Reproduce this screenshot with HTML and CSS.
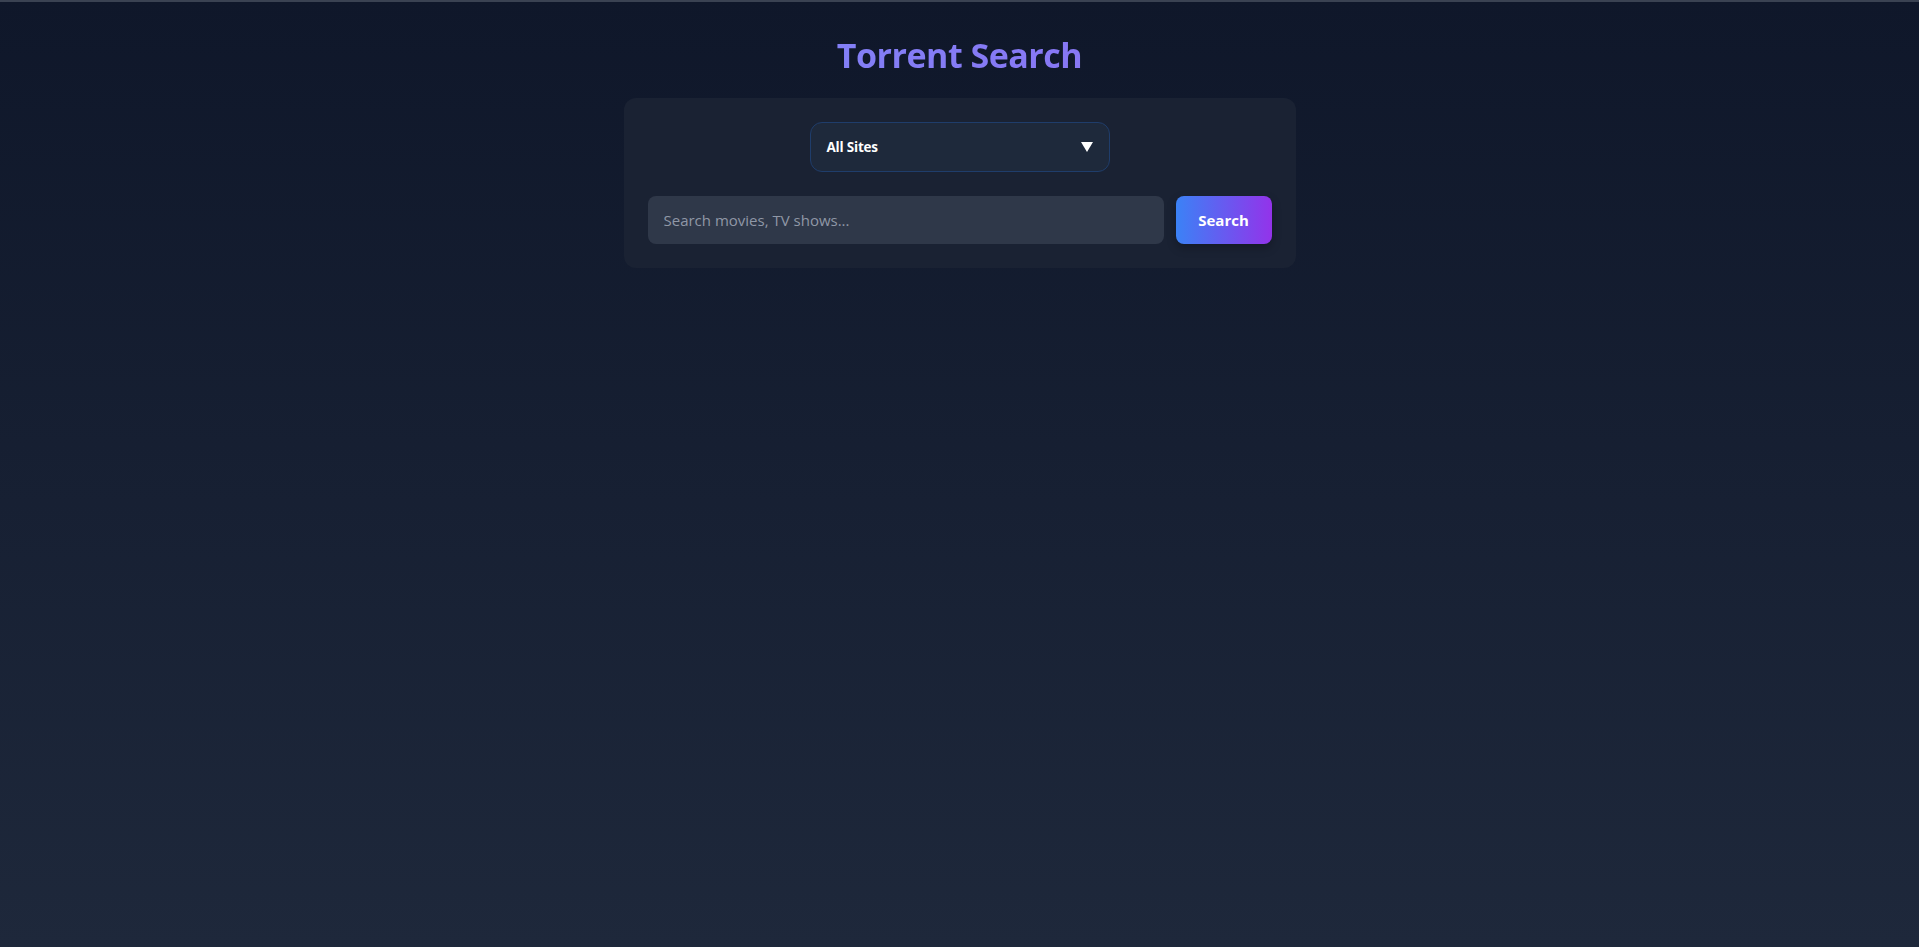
FILE: index.html
```html
<!DOCTYPE html>
<html lang="en">
<head>
<meta charset="utf-8">
<title>Torrent Search</title>
<link rel="stylesheet" href="styles.css">
</head>
<body>
<main class="page">
  <h1 class="title">Torrent Search</h1>
  <section class="card">
    <div class="select-wrap">
      <div class="select">
        <span class="select-label">All Sites</span>
        <svg class="caret" width="12" height="10" viewBox="0 0 12 10"><path d="M0 0H12L6 10Z" fill="#ffffff"/></svg>
      </div>
    </div>
    <div class="search-row">
      <input class="search-input" type="text" placeholder="Search movies, TV shows...">
      <button class="search-btn" type="button">Search</button>
    </div>
  </section>
</main>
</body>
</html>
```
FILE: styles.css
```css
* { box-sizing: border-box; }
html, body { margin: 0; padding: 0; }
body {
  min-height: 100vh;
  border-top: 2px solid #3a4252;
  background: linear-gradient(180deg, #0f172a 0%, #1e283b 100%);
  font-family: "Open Sans", "Noto Sans", Arial, sans-serif;
  color: #fff;
}
.page {
  max-width: 672px;
  margin: 0 auto;
  padding-top: 33px;
}
.title {
  margin: 0 0 23px;
  text-align: center;
  font-size: 34px;
  line-height: 40px;
  font-weight: 700;
  letter-spacing: -0.5px;
  background: linear-gradient(90deg, #7f86f8, #8b70f2);
  -webkit-background-clip: text;
  background-clip: text;
  color: transparent;
}
.card {
  background: #1a2233;
  border-radius: 12px;
  padding: 24px;
}
.select-wrap {
  display: flex;
  justify-content: center;
  margin-bottom: 24px;
}
.select {
  width: 300px;
  height: 50px;
  border: 1px solid #1f3d6b;
  border-radius: 12px;
  background: #1e293b;
  display: flex;
  align-items: center;
  justify-content: space-between;
  padding: 0 16px 0 16px;
}
.select-label {
  font-size: 13.5px;
  font-weight: 700;
  color: #ffffff;
  letter-spacing: -0.2px;
}
.caret { display: block; }
.search-row {
  display: flex;
  gap: 12px;
}
.search-input {
  flex: 1;
  height: 48px;
  border: none;
  outline: none;
  border-radius: 8px;
  background: #2f3849;
  padding: 0 16px;
  font-family: inherit;
  font-size: 15px;
  color: #fff;
}
.search-input::placeholder { color: #8f97a6; }
.search-btn {
  width: 96px;
  height: 48px;
  border: none;
  border-radius: 8px;
  background: linear-gradient(90deg, #3b82f6, #9333ea);
  color: #fff;
  font-family: inherit;
  font-size: 15px;
  font-weight: 700;
  box-shadow: 0 4px 10px rgba(0, 0, 0, 0.25);
}
```
